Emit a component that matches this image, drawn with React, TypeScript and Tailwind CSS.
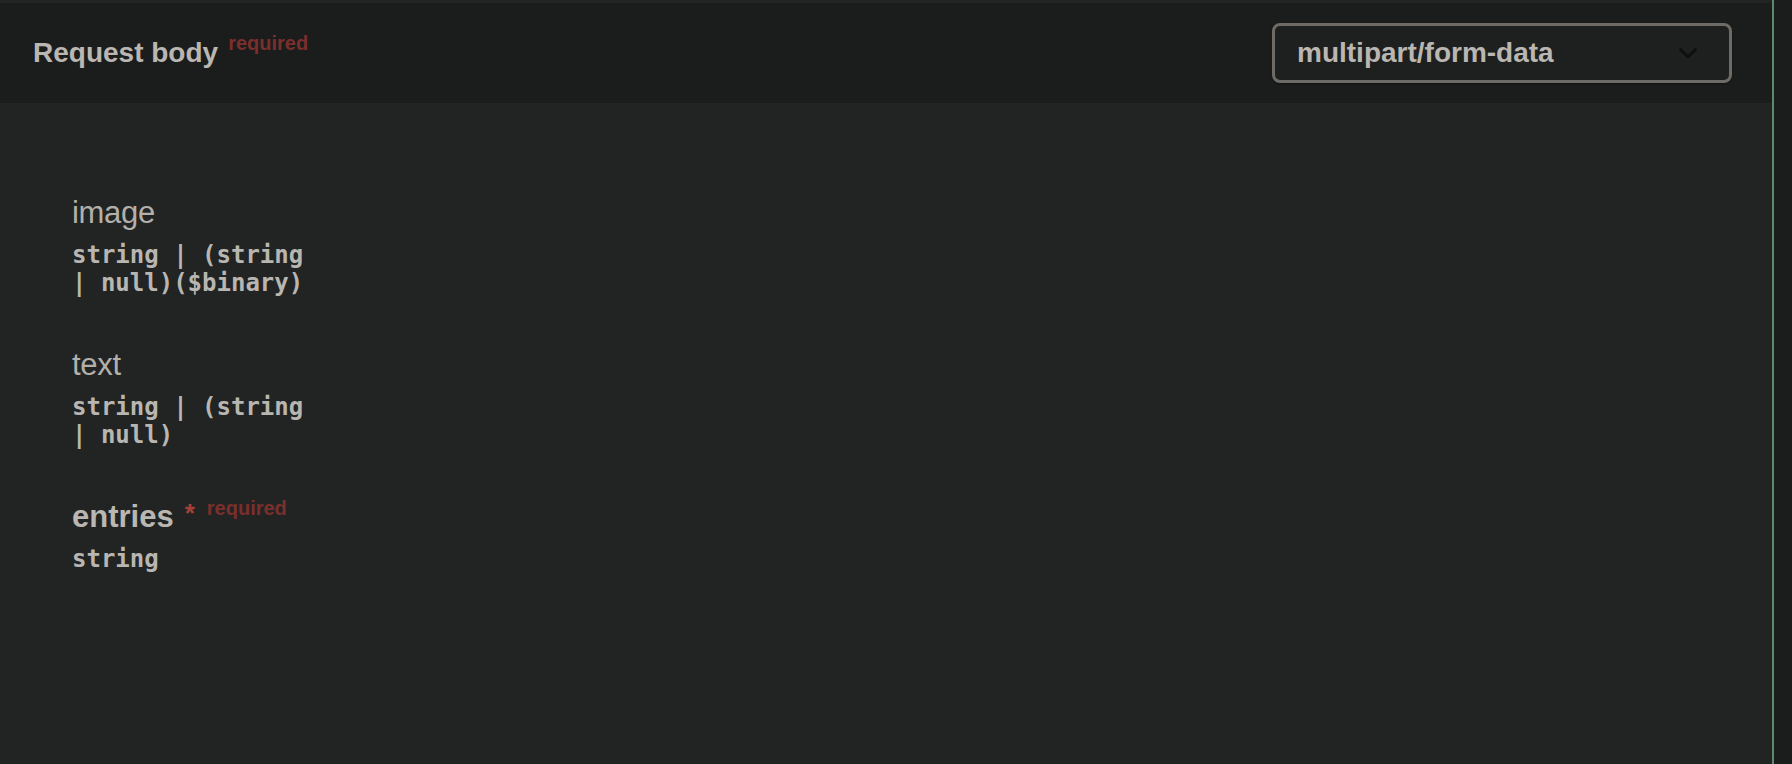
import React from "react";

const mono = "font-['DejaVu_Sans_Mono','Liberation_Mono',monospace]";

function Field({ name, type }: { name: string; type: string }) {
  return (
    <div className="flex flex-col gap-[8px]">
      <div className="h-[40px] text-[31px] leading-[40px] tracking-[-0.3px] text-[#b3b0ab]">{name}</div>
      <div className={`${mono} w-[240px] text-[24px] font-bold leading-[28px] text-[#b9b6b1]`}>{type}</div>
    </div>
  );
}

export default function App() {
  return (
    <div className="flex h-[764px] w-[1792px] overflow-hidden bg-[#1b1c1c] font-['Liberation_Sans',Arial,sans-serif]">
      <div className="flex w-[1772px] flex-col bg-[#212423] pt-[3px]">
        <div className="flex h-[100px] items-center justify-between bg-[#1b1c1c] pl-[33px] pr-[40px]">
          <div className="leading-none">
            <span className="text-[28px] font-bold leading-none text-[#bab6b1]">Request body</span>
            <span className="relative -top-[12px] ml-[10px] text-[20px] font-bold leading-none text-[#7a2f2c]">required</span>
          </div>
          <div className="flex h-[60px] w-[460px] items-center justify-between rounded-[8px] border-[3px] border-[#6e6b67] bg-[#1e201f] pl-[22px] pr-[32px] shadow-[0_1px_2px_rgba(0,0,0,0.4)]">
            <span className="text-[28px] font-bold leading-none text-[#bab6b1]">multipart/form-data</span>
            <svg width="18" height="11" viewBox="0 0 18 11" fill="none">
              <path d="M1.5 1.5 L9 9 L16.5 1.5" stroke="#0e0f0f" strokeWidth="3" strokeLinecap="round" strokeLinejoin="round" />
            </svg>
          </div>
        </div>
        <div className="flex flex-col gap-[48px] pl-[72px] pt-[90px]">
          <Field name="image" type="string | (string | null)($binary)" />
          <Field name="text" type="string | (string | null)" />
          <div className="flex flex-col gap-[8px]">
            <div className="flex h-[40px] items-baseline leading-[40px]">
              <span className="text-[31px] font-bold text-[#bab6b1]">entries</span>
              <span className="relative -top-[5px] ml-[11px] text-[26px] font-bold text-[#a63f39]">*</span>
              <span className="relative -top-[12px] ml-[12px] text-[20px] font-bold text-[#7a2f2c]">required</span>
            </div>
            <div className={`${mono} text-[24px] font-bold leading-[28px] text-[#b9b6b1]`}>string</div>
          </div>
        </div>
      </div>
      <div className="w-[2px] bg-[#5b8a71]" />
    </div>
  );
}
